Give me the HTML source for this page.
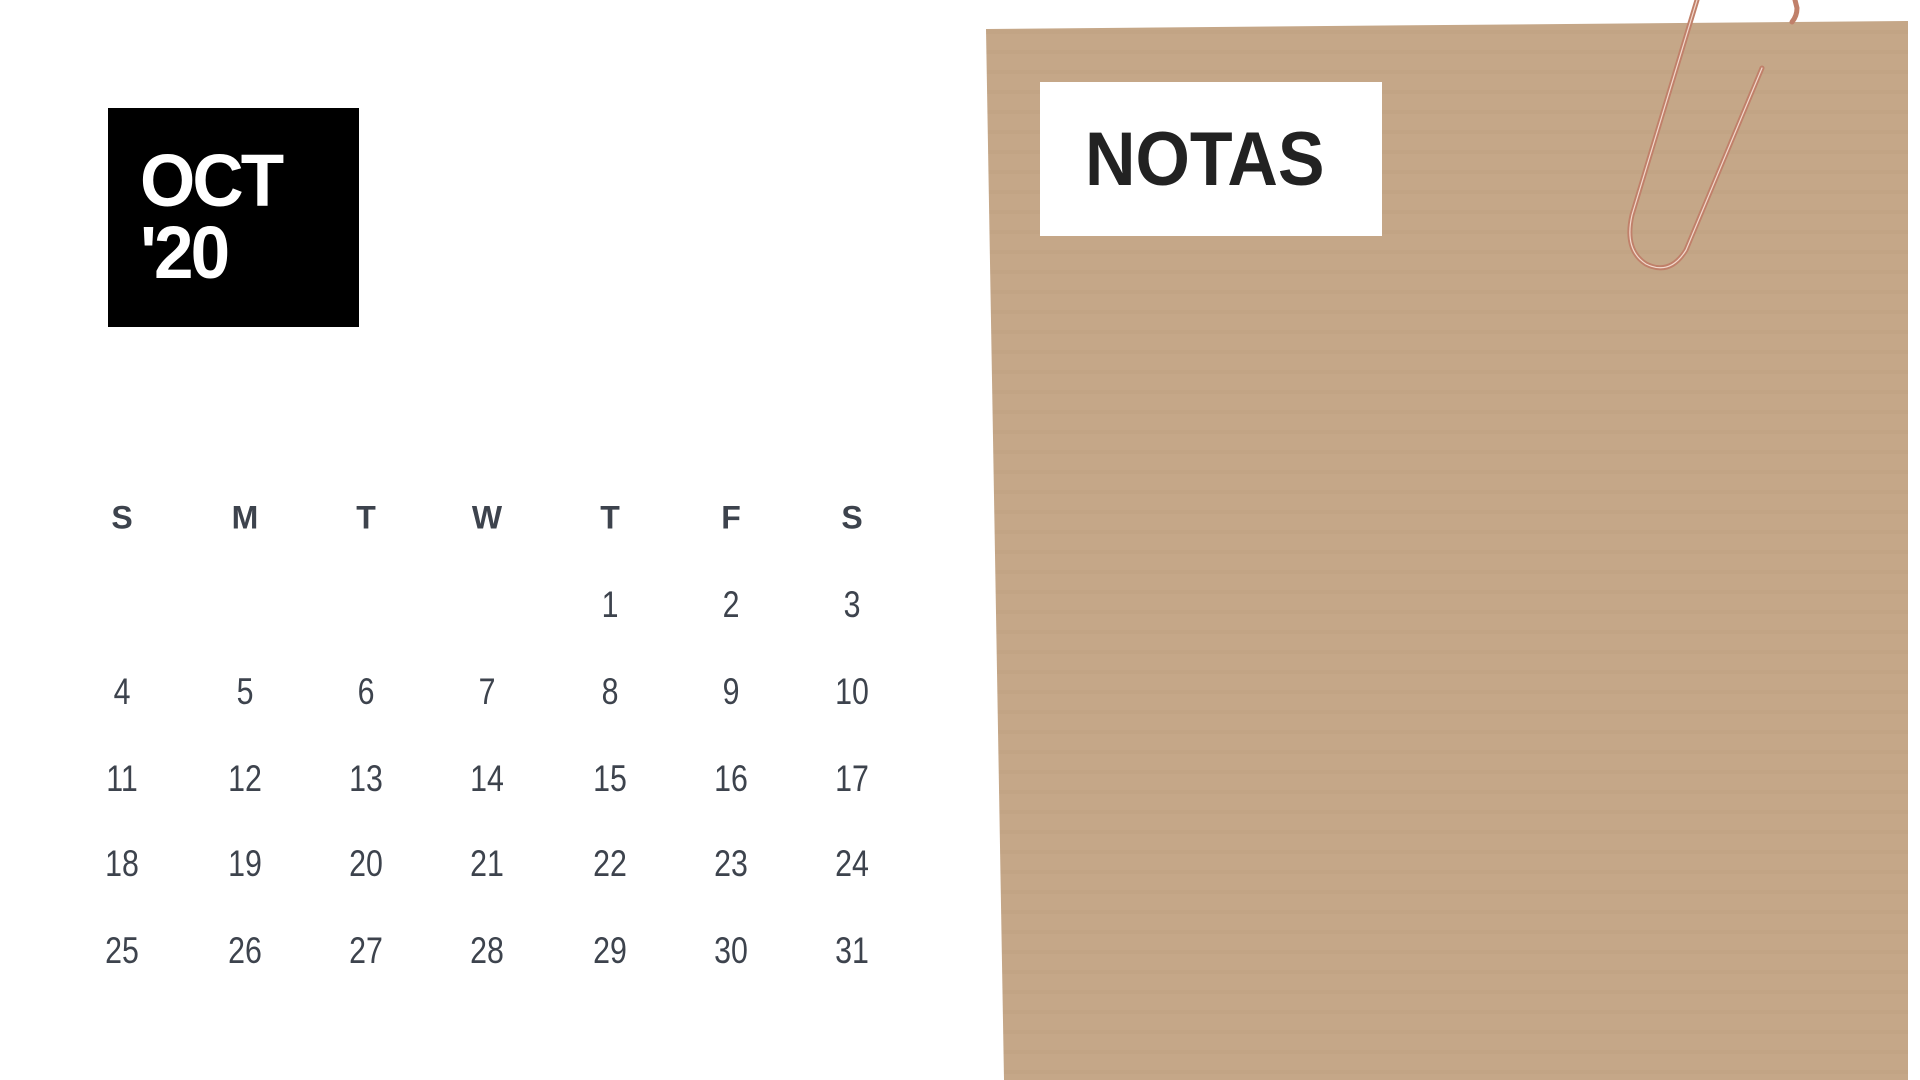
<!DOCTYPE html>
<html><head><meta charset="utf-8"><style>
html,body{margin:0;padding:0;width:1920px;height:1080px;overflow:hidden;background:#fff;position:relative;font-family:"Liberation Sans",sans-serif}
.box{position:absolute;left:108px;top:108px;width:251px;height:219px;background:#000}
.box div{position:absolute;left:32px;color:#fff;font-weight:bold;font-size:74px;line-height:1;letter-spacing:-3px;transform:scaleX(.96);transform-origin:left}
.c{position:absolute;transform:translate(-50%,-50%);color:#3d434d;white-space:nowrap}
.h{font-weight:bold;font-size:32px}
.n{font-size:37px;transform:translate(-50%,-50%) scaleX(.82)}
.card{position:absolute;left:0;top:0;width:1920px;height:1080px;
clip-path:polygon(986px 29px,1908px 21px,1908px 1080px,1004px 1080px);
background:repeating-linear-gradient(180deg,rgba(0,0,0,0) 0 10px,rgba(90,60,30,.03) 10px 14px,rgba(0,0,0,0) 14px 20px),#c5a788}
.notas{position:absolute;left:1040px;top:82px;width:342px;height:154px;background:#fff}
.notas span{position:absolute;left:45px;top:40px;font-weight:bold;font-size:76px;line-height:1;color:#222;transform:scaleX(.92);transform-origin:left}
</style></head><body>
<div class="box"><div style="top:36px">OCT</div><div style="top:108px">'20</div></div>
<div class="c h" style="left:122px;top:518px">S</div>
<div class="c h" style="left:245px;top:518px">M</div>
<div class="c h" style="left:366px;top:518px">T</div>
<div class="c h" style="left:487px;top:518px">W</div>
<div class="c h" style="left:610px;top:518px">T</div>
<div class="c h" style="left:731px;top:518px">F</div>
<div class="c h" style="left:852px;top:518px">S</div>

<div class="c n" style="left:610px;top:605px">1</div>
<div class="c n" style="left:731px;top:605px">2</div>
<div class="c n" style="left:852px;top:605px">3</div>

<div class="c n" style="left:122px;top:692px">4</div>
<div class="c n" style="left:245px;top:692px">5</div>
<div class="c n" style="left:366px;top:692px">6</div>
<div class="c n" style="left:487px;top:692px">7</div>
<div class="c n" style="left:610px;top:692px">8</div>
<div class="c n" style="left:731px;top:692px">9</div>
<div class="c n" style="left:852px;top:692px">10</div>

<div class="c n" style="left:122px;top:779px">11</div>
<div class="c n" style="left:245px;top:779px">12</div>
<div class="c n" style="left:366px;top:779px">13</div>
<div class="c n" style="left:487px;top:779px">14</div>
<div class="c n" style="left:610px;top:779px">15</div>
<div class="c n" style="left:731px;top:779px">16</div>
<div class="c n" style="left:852px;top:779px">17</div>

<div class="c n" style="left:122px;top:864px">18</div>
<div class="c n" style="left:245px;top:864px">19</div>
<div class="c n" style="left:366px;top:864px">20</div>
<div class="c n" style="left:487px;top:864px">21</div>
<div class="c n" style="left:610px;top:864px">22</div>
<div class="c n" style="left:731px;top:864px">23</div>
<div class="c n" style="left:852px;top:864px">24</div>

<div class="c n" style="left:122px;top:951px">25</div>
<div class="c n" style="left:245px;top:951px">26</div>
<div class="c n" style="left:366px;top:951px">27</div>
<div class="c n" style="left:487px;top:951px">28</div>
<div class="c n" style="left:610px;top:951px">29</div>
<div class="c n" style="left:731px;top:951px">30</div>
<div class="c n" style="left:852px;top:951px">31</div>

<div class="card"></div>
<div class="notas"><span>NOTAS</span></div>
<svg style="position:absolute;left:0;top:0" width="1920" height="1080">
<g fill="none" stroke-linecap="round">
<path d="M1697 0 L1632 215 Q1624 250 1646 264 Q1670 276 1686 250 L1762 68" stroke="#c0806a" stroke-width="5"/>
<path d="M1697 0 L1632 215 Q1624 250 1646 264 Q1670 276 1686 250 L1762 68" stroke="#f3d8cc" stroke-width="1.2"/>
<path d="M1795 0 L1797 8 Q1797 16 1792 22" stroke="#c0806a" stroke-width="5"/>
</g>
</svg>
</body></html>
